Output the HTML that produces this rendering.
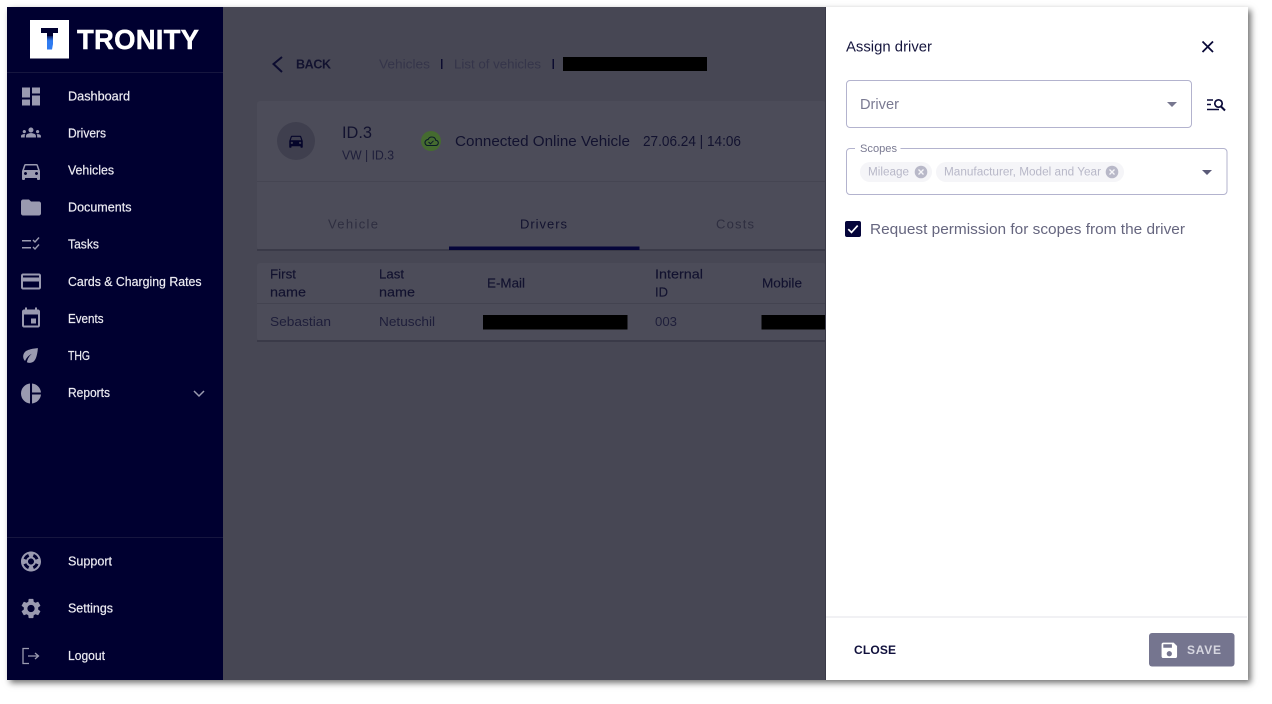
<!DOCTYPE html>
<html><head><meta charset="utf-8"><title>Assign driver</title>
<style>
html,body{margin:0;padding:0;background:#fff;width:1272px;height:704px;overflow:hidden}
#f{position:absolute;left:7px;top:7px;width:1241px;height:673px;box-shadow:3px 3px 6px rgba(0,0,0,.55)}
svg{position:absolute;left:0;top:0}
text{font-family:"Liberation Sans",sans-serif;white-space:pre}
.n text{fill:#ecebf2;font-size:12.500px;stroke:#ecebf2;stroke-width:.2px}
.i path{fill:#9a9ab0}
.d{fill:#12122f}.m{fill:#1e1e3a}
</style></head><body>
<div id="f"></div>
<svg width="1272" height="704" viewBox="0 0 1272 704">
<defs><linearGradient id="g" x1="0" y1="0" x2="0" y2="1"><stop offset="0" stop-color="#0a1a60"/><stop offset=".35" stop-color="#2f7bf0"/><stop offset="1" stop-color="#2f7bf0"/></linearGradient></defs>
<rect x="223" y="7" width="603" height="673" fill="#474754"/>
<!-- sidebar -->
<rect x="7" y="7" width="216" height="673" fill="#000030"/>
<rect x="7" y="72" width="216" height="1" fill="#16163f"/>
<rect x="7" y="537" width="216" height="1" fill="#16163f"/>
<rect x="30" y="20" width="39" height="38.500" fill="#fff"/>
<path d="M41 28h17v5h-5v4h-6v-4h-6z" fill="#000030"/>
<path d="M47 36h6v8l-1 5.500h-5z" fill="url(#g)"/>
<text x="77" y="49" font-size="27.500" font-weight="700" fill="#fff" stroke="#fff" stroke-width=".4" textLength="122" lengthAdjust="spacing">TRONITY</text>
<g class="n">
<text x="68" y="100.500" textLength="62" lengthAdjust="spacingAndGlyphs">Dashboard</text>
<text x="68" y="137.500" textLength="38" lengthAdjust="spacingAndGlyphs">Drivers</text>
<text x="68" y="174.500" textLength="46" lengthAdjust="spacingAndGlyphs">Vehicles</text>
<text x="68" y="211.500" textLength="63.500" lengthAdjust="spacingAndGlyphs">Documents</text>
<text x="68" y="248.500" textLength="31" lengthAdjust="spacingAndGlyphs">Tasks</text>
<text x="68" y="286" textLength="133.500" lengthAdjust="spacingAndGlyphs">Cards &amp; Charging Rates</text>
<text x="68" y="323" textLength="35.500" lengthAdjust="spacingAndGlyphs">Events</text>
<text x="68" y="360" textLength="22" lengthAdjust="spacingAndGlyphs">THG</text>
<text x="68" y="397" textLength="42" lengthAdjust="spacingAndGlyphs">Reports</text>
<text x="68" y="565.500" textLength="44" lengthAdjust="spacingAndGlyphs">Support</text>
<text x="68" y="612.500" textLength="45" lengthAdjust="spacingAndGlyphs">Settings</text>
<text x="68" y="660" textLength="37" lengthAdjust="spacingAndGlyphs">Logout</text>
</g>
<g class="i">
<path transform="translate(19,84.500)" d="M3 13h8V3H3v10zm0 8h8v-6H3v6zm10 0h8V11h-8v10zm0-18v6h8V3h-8z"/>
<path transform="translate(21,122.500) scale(.83)" d="M12 12.750c1.630 0 3.070.390 4.240.900 1.080.480 1.760 1.560 1.760 2.730V18H6v-1.610c0-1.180.680-2.260 1.760-2.730 1.170-.520 2.610-.910 4.240-.910zM4 13c1.100 0 2-.900 2-2s-.900-2-2-2-2 .900-2 2 .900 2 2 2zm1.130 1.100C4.760 14.040 4.390 14 4 14c-.990 0-1.930.210-2.780.580C.480 14.900 0 15.620 0 16.430V18h4.500v-1.610c0-.830.230-1.610.630-2.290zM20 13c1.100 0 2-.900 2-2s-.900-2-2-2-2 .900-2 2 .900 2 2 2zm4 3.430c0-.810-.480-1.530-1.220-1.850C21.930 14.210 20.990 14 20 14c-.390 0-.760.040-1.130.100.400.680.630 1.460.630 2.290V18H24v-1.570zM12 6c1.660 0 3 1.340 3 3s-1.340 3-3 3-3-1.340-3-3 1.340-3 3-3z"/>
<path transform="translate(19,159)" d="M18.920 6.010C18.720 5.420 18.160 5 17.500 5h-11c-.660 0-1.210.420-1.420 1.010L3 12v8c0 .550.450 1 1 1h1c.550 0 1-.450 1-1v-1h12v1c0 .550.450 1 1 1h1c.550 0 1-.450 1-1v-8l-2.080-5.990zM6.500 16c-.830 0-1.500-.670-1.500-1.500S5.670 13 6.500 13s1.500.670 1.500 1.500S7.330 16 6.500 16zm11 0c-.830 0-1.500-.670-1.500-1.500s.670-1.500 1.500-1.500 1.500.670 1.500 1.500-.670 1.500-1.500 1.500zM5 11l1.500-4.500h11L19 11H5z"/>
<path transform="translate(19,195.500)" d="M10 4H4c-1.100 0-1.990.900-1.990 2L2 18c0 1.100.900 2 2 2h16c1.100 0 2-.900 2-2V8c0-1.100-.900-2-2-2h-8l-2-2z"/>
<path d="M22 240h9v1.500h-9zM22 247h9v1.500h-9z"/>
<path d="M33 240l2 2 4-4.500M33 247l2 2 4-4.500" style="fill:none;stroke:#9a9ab0;stroke-width:1.400"/>
<path transform="translate(19,269.500)" d="M20 4H4c-1.110 0-1.990.890-1.990 2L2 18c0 1.110.890 2 2 2h16c1.110 0 2-.890 2-2V6c0-1.110-.890-2-2-2zm0 14H4v-6h16v6zm0-10H4V6h16v2z"/>
<path transform="translate(19,306.500)" d="M17 12h-5v5h5v-5zM16 1v2H8V1H6v2H5c-1.110 0-1.990.900-1.990 2L3 19c0 1.100.890 2 2 2h14c1.100 0 2-.900 2-2V5c0-1.100-.900-2-2-2h-1V1h-2zm3 18H5V8h14v11z"/>
<path transform="translate(19.500,344.500) scale(.92)" d="M6.050 8.050c-2.730 2.730-2.730 7.150-.020 9.880 1.470-3.400 4.090-6.240 7.360-7.930-2.770 2.340-4.710 5.610-5.390 9.320 2.600 1.230 5.800.780 7.950-1.370C19.430 14.470 20 4 20 4S9.530 4.570 6.050 8.050z"/>
<path transform="translate(19,381.500)" d="M11 2v20c-5.070-.500-9-4.790-9-10s3.930-9.500 9-10zm2.030 0v8.990H22c-.470-4.740-4.240-8.520-8.970-8.990zm0 11.010V22c4.740-.470 8.500-4.250 8.970-8.990h-8.970z"/>
<path transform="translate(19,549.500)" d="M12 2C6.480 2 2 6.480 2 12s4.480 10 10 10 10-4.480 10-10S17.520 2 12 2zm7.460 7.120l-2.780 1.150c-.510-1.360-1.580-2.440-2.950-2.940l1.150-2.780c2.100.800 3.770 2.470 4.580 4.570zM12 15c-1.660 0-3-1.340-3-3s1.340-3 3-3 3 1.340 3 3-1.340 3-3 3zM9.130 4.540l1.170 2.780c-1.380.500-2.470 1.590-2.980 2.970L4.540 9.130c.810-2.110 2.480-3.780 4.590-4.590zM4.540 14.870l2.780-1.150c.510 1.380 1.590 2.460 2.970 2.960l-1.170 2.780c-2.100-.810-3.770-2.480-4.580-4.590zm10.340 4.590l-1.150-2.780c1.370-.510 2.450-1.590 2.950-2.970l2.780 1.170c-.810 2.100-2.480 3.770-4.580 4.580z"/>
<path transform="translate(19,596.500)" d="M19.140 12.940c.040-.300.060-.610.060-.940 0-.320-.020-.640-.070-.940l2.030-1.580c.180-.140.230-.410.120-.610l-1.920-3.320c-.120-.220-.370-.290-.590-.220l-2.390.960c-.500-.380-1.030-.700-1.620-.940l-.360-2.540c-.040-.240-.240-.410-.480-.410h-3.840c-.240 0-.430.170-.47.410l-.360 2.540c-.590.240-1.130.570-1.620.940l-2.390-.960c-.220-.080-.470 0-.590.220L2.740 8.870c-.120.210-.080.470.120.610l2.030 1.580c-.050.300-.090.630-.090.940s.020.640.070.940l-2.030 1.580c-.180.140-.230.410-.120.610l1.920 3.320c.120.220.370.290.590.220l2.390-.960c.500.380 1.030.700 1.620.940l.360 2.540c.050.240.240.410.480.410h3.840c.240 0 .440-.170.470-.410l.360-2.540c.590-.240 1.130-.560 1.620-.940l2.390.960c.220.080.470 0 .590-.220l1.920-3.320c.120-.220.070-.470-.120-.610l-2.010-1.580zM12 15.600c-1.980 0-3.600-1.620-3.600-3.600s1.620-3.600 3.600-3.600 3.600 1.620 3.600 3.600-1.620 3.600-3.600 3.600z"/>
<path d="M29 648.500h-6v15h6M28 656h10M35 653l3.500 3-3.500 3" style="fill:none;stroke:#9a9ab0;stroke-width:1.300"/>
<path d="M194 391l5 5 5-5" style="fill:none;stroke:#9a9ab0;stroke-width:1.500"/>
</g>
<!-- breadcrumb -->
<path d="M282 57l-8.500 7 8.500 8" fill="none" stroke="#0c0c30" stroke-width="2"/>
<text x="296" y="68.500" font-size="12.500" font-weight="700" class="d" textLength="35" lengthAdjust="spacing">BACK</text>
<text x="379" y="68.500" font-size="13" fill="#35354a" textLength="51" lengthAdjust="spacingAndGlyphs">Vehicles</text>
<rect x="441" y="59" width="1.500" height="10" fill="#0c0c30"/>
<text x="454" y="68.500" font-size="13" fill="#35354a" textLength="87" lengthAdjust="spacingAndGlyphs">List of vehicles</text>
<rect x="552.500" y="59" width="1.500" height="10" fill="#0c0c30"/>
<rect x="563" y="57" width="144" height="14" fill="#000"/>
<!-- card -->
<rect x="257" y="101" width="569" height="149" rx="3" fill="#4c4c59"/>
<rect x="257" y="249" width="569" height="2" fill="#3a3a48"/>
<rect x="257" y="181" width="569" height="1" fill="#454552"/>
<circle cx="296" cy="141" r="19" fill="#3f3f4e"/>
<path transform="translate(287,132) scale(.75)" fill="#05052a" d="M18.920 6.010C18.720 5.420 18.160 5 17.500 5h-11c-.660 0-1.210.420-1.420 1.010L3 12v8c0 .550.450 1 1 1h1c.550 0 1-.450 1-1v-1h12v1c0 .550.450 1 1 1h1c.550 0 1-.450 1-1v-8l-2.080-5.990zM6.500 16c-.830 0-1.500-.670-1.500-1.500S5.670 13 6.500 13s1.500.670 1.500 1.500S7.330 16 6.500 16zm11 0c-.830 0-1.500-.670-1.500-1.500s.670-1.500 1.500-1.500 1.500.670 1.500 1.500-.670 1.500-1.500 1.500zM5 11l1.500-4.500h11L19 11H5z"/>
<text x="342" y="138" font-size="17" class="d" textLength="30" lengthAdjust="spacingAndGlyphs">ID.3</text>
<text x="342" y="159.500" font-size="12.500" class="m" textLength="52" lengthAdjust="spacingAndGlyphs">VW | ID.3</text>
<circle cx="431" cy="141" r="10" fill="#456b30"/>
<path d="M426.500 145.500h9c1.800 0 2.800-1.300 2.800-2.600 0-1.400-1-2.500-2.500-2.600-.4-2-2-3.300-4-3.300-1.700 0-3 1-3.600 2.400-1.900.2-3.200 1.700-3.200 3.200 0 1.500 1.200 2.900 2.500 2.900z" fill="none" stroke="#0a1a28" stroke-width="1.100"/>
<path d="M428.500 142l2 1.800 3-3" fill="none" stroke="#0a1a28" stroke-width="1"/>
<text x="455" y="146" font-size="15" class="d" textLength="175" lengthAdjust="spacingAndGlyphs">Connected Online Vehicle</text>
<text x="643" y="146" font-size="14.500" class="d" textLength="98" lengthAdjust="spacingAndGlyphs">27.06.24 | 14:06</text>
<text x="328" y="228.500" font-size="13" fill="#2e2e40" textLength="50" lengthAdjust="spacing">Vehicle</text>
<text x="520" y="228.500" font-size="13" class="d" textLength="47" lengthAdjust="spacing">Drivers</text>
<text x="716" y="228.500" font-size="13" fill="#2e2e40" textLength="38" lengthAdjust="spacing">Costs</text>
<rect x="449" y="246.500" width="190.500" height="3.500" fill="#05053a"/>
<!-- table -->
<rect x="257" y="263" width="569" height="78" rx="3" fill="#4c4c59"/>
<rect x="257" y="340" width="569" height="2" fill="#3a3a48"/>
<rect x="257" y="303" width="569" height="1" fill="#434350"/>
<g font-size="13" class="d" stroke="#12122f" stroke-width=".15">
<text x="270" y="278.500" textLength="26" lengthAdjust="spacingAndGlyphs">First</text>
<text x="270" y="296.500" textLength="36" lengthAdjust="spacingAndGlyphs">name</text>
<text x="379" y="278.500" textLength="25" lengthAdjust="spacingAndGlyphs">Last</text>
<text x="379" y="296.500" textLength="36" lengthAdjust="spacingAndGlyphs">name</text>
<text x="487" y="287.500" textLength="38" lengthAdjust="spacingAndGlyphs">E-Mail</text>
<text x="655" y="278.500" textLength="48" lengthAdjust="spacingAndGlyphs">Internal</text>
<text x="655" y="296.500" textLength="13" lengthAdjust="spacingAndGlyphs">ID</text>
<text x="762" y="287.500" textLength="40" lengthAdjust="spacingAndGlyphs">Mobile</text>
</g>
<g font-size="13" class="m">
<text x="270" y="326" textLength="61" lengthAdjust="spacingAndGlyphs">Sebastian</text>
<text x="379" y="326" textLength="56" lengthAdjust="spacingAndGlyphs">Netuschil</text>
<text x="655" y="326" textLength="22" lengthAdjust="spacingAndGlyphs">003</text>
</g>
<rect x="483" y="315" width="144.500" height="14.500" fill="#000"/>
<rect x="761.500" y="315" width="65" height="14.500" fill="#000"/>
<!-- panel -->
<rect x="825" y="7" width="1" height="673" fill="#3a3a48"/>
<rect x="826" y="7" width="422" height="673" fill="#fff"/>
<text x="846" y="51.500" font-size="14.500" fill="#15153d" textLength="86" lengthAdjust="spacingAndGlyphs">Assign driver</text>
<path d="M1202.500 41.500l10.500 10.500M1213 41.500l-10.500 10.500" stroke="#0a0a38" stroke-width="1.800" fill="none"/>
<rect x="846.500" y="80.500" width="345" height="47" rx="3.500" fill="#fff" stroke="#b3b3ce"/>
<text x="860" y="109" font-size="14.500" fill="#7a7a92" textLength="39" lengthAdjust="spacingAndGlyphs">Driver</text>
<path d="M1167 102h10l-5 5z" fill="#77778f"/>
<path d="M1207 100h6M1207 104.500h4M1207 109.500h12" stroke="#0a0a38" stroke-width="1.600" fill="none"/>
<circle cx="1218.500" cy="103.500" r="3.700" fill="none" stroke="#0a0a38" stroke-width="1.700"/>
<path d="M1221 106.500l4 4" stroke="#0a0a38" stroke-width="2" fill="none"/>
<rect x="846.500" y="148.500" width="380.500" height="46" rx="3.500" fill="#fff" stroke="#b3b3ce"/>
<rect x="855" y="146" width="45.500" height="5" fill="#fff"/>
<text x="860" y="152" font-size="11" fill="#7a7a92" textLength="37" lengthAdjust="spacingAndGlyphs">Scopes</text>
<rect x="860" y="162" width="72" height="20" rx="10" fill="#f5f5f8"/>
<text x="868" y="175.500" font-size="11.500" fill="#b8b8c8" textLength="41" lengthAdjust="spacingAndGlyphs">Mileage</text>
<circle cx="921" cy="172" r="6.300" fill="#b8b8c8"/>
<path d="M918.500 169.500l5 5M923.500 169.500l-5 5" stroke="#f5f5f8" stroke-width="1.300"/>
<rect x="936" y="162" width="188" height="20" rx="10" fill="#f5f5f8"/>
<text x="944" y="175.500" font-size="11.500" fill="#b8b8c8" textLength="157" lengthAdjust="spacingAndGlyphs">Manufacturer, Model and Year</text>
<circle cx="1112" cy="172" r="6.300" fill="#b8b8c8"/>
<path d="M1109.500 169.500l5 5M1114.500 169.500l-5 5" stroke="#f5f5f8" stroke-width="1.300"/>
<path d="M1202 170h10l-5 5z" fill="#5a5a78"/>
<rect x="845" y="221" width="16" height="16" rx="2" fill="#05053a"/>
<path d="M848.300 229.200l3.200 3.200 6.200-6.800" stroke="#fff" stroke-width="1.700" fill="none"/>
<text x="870" y="234" font-size="14.500" fill="#66667f" textLength="315" lengthAdjust="spacingAndGlyphs">Request permission for scopes from the driver</text>
<rect x="826" y="616" width="421" height="2" fill="#f1f1f4"/>
<text x="854" y="654" font-size="12" font-weight="700" fill="#10103c" textLength="42" lengthAdjust="spacing">CLOSE</text>
<rect x="1149" y="633" width="85.500" height="33.500" rx="3" fill="#75758f"/>
<path transform="translate(1159,640) scale(.86)" fill="#fff" d="M17 3H5c-1.110 0-2 .900-2 2v14c0 1.100.890 2 2 2h14c1.100 0 2-.900 2-2V7l-4-4zm-5 16c-1.660 0-3-1.340-3-3s1.340-3 3-3 3 1.340 3 3-1.340 3-3 3zm3-10H5V5h10v4z"/>
<text x="1187" y="654" font-size="12" font-weight="700" fill="#d6d6e0" textLength="34" lengthAdjust="spacing">SAVE</text>
</svg>
</body></html>
